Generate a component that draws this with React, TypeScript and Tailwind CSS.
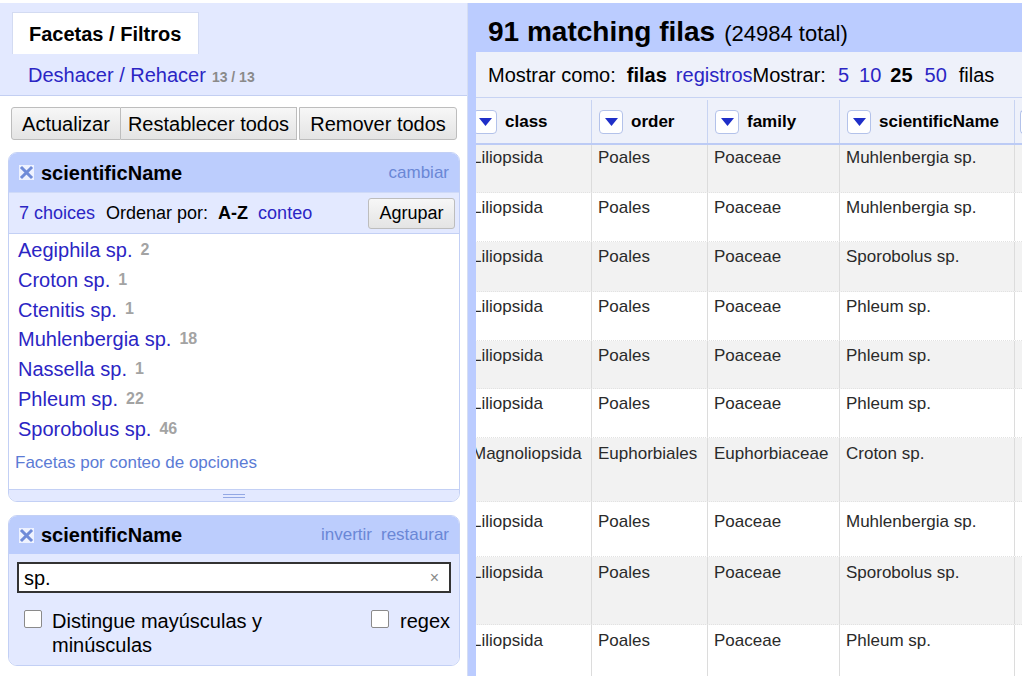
import React from 'react';

const facetChoices = [
  { name: 'Aegiphila sp.', count: 2 },
  { name: 'Croton sp.', count: 1 },
  { name: 'Ctenitis sp.', count: 1 },
  { name: 'Muhlenbergia sp.', count: 18 },
  { name: 'Nassella sp.', count: 1 },
  { name: 'Phleum sp.', count: 22 },
  { name: 'Sporobolus sp.', count: 46 },
];

const rows = [
  { c: 'Liliopsida', o: 'Poales', f: 'Poaceae', s: 'Muhlenbergia sp.', h: 48, pt: 3 },
  { c: 'Liliopsida', o: 'Poales', f: 'Poaceae', s: 'Muhlenbergia sp.', h: 49, pt: 5 },
  { c: 'Liliopsida', o: 'Poales', f: 'Poaceae', s: 'Sporobolus sp.', h: 50, pt: 5 },
  { c: 'Liliopsida', o: 'Poales', f: 'Poaceae', s: 'Phleum sp.', h: 49, pt: 5 },
  { c: 'Liliopsida', o: 'Poales', f: 'Poaceae', s: 'Phleum sp.', h: 48, pt: 5 },
  { c: 'Liliopsida', o: 'Poales', f: 'Poaceae', s: 'Phleum sp.', h: 49, pt: 5 },
  { c: 'Magnoliopsida', o: 'Euphorbiales', f: 'Euphorbiaceae', s: 'Croton sp.', h: 64, pt: 6 },
  { c: 'Liliopsida', o: 'Poales', f: 'Poaceae', s: 'Muhlenbergia sp.', h: 55, pt: 10 },
  { c: 'Liliopsida', o: 'Poales', f: 'Poaceae', s: 'Sporobolus sp.', h: 68, pt: 6 },
  { c: 'Liliopsida', o: 'Poales', f: 'Poaceae', s: 'Phleum sp.', h: 60, pt: 6 },
];

const columns = [
  { key: 'class', w: 'w-[126px]' },
  { key: 'order', w: 'w-[116px]' },
  { key: 'family', w: 'w-[132px]' },
  { key: 'scientificName', w: 'w-[175px]' },
];

function CloseIcon() {
  return (
    <svg width="15" height="15" viewBox="0 0 15 15" className="shrink-0">
      <rect x="0" y="0" width="15" height="15" fill="#eef2ff" />
      <path d="M3 3 L12 12 M12 3 L3 12" stroke="#6f8bd8" strokeWidth="3" strokeLinecap="square" />
    </svg>
  );
}

function DropButton() {
  return (
    <span className="flex items-center justify-center w-[24px] h-[24px] shrink-0 rounded-[4px] border border-[#b3c2ea] bg-white">
      <svg width="13" height="8" viewBox="0 0 13 8">
        <path d="M0 0 L13 0 L6.5 8 Z" fill="#1f2fc8" />
      </svg>
    </span>
  );
}

function Checkbox() {
  return <span className="inline-block w-[18px] h-[18px] shrink-0 rounded-[2px] border border-[#8a8a8a] bg-white" />;
}

export default function App() {
  return (
    <div className="w-[1022px] h-[676px] overflow-hidden bg-white font-['Liberation_Sans',Arial,sans-serif] text-black flex flex-col">
      <div className="h-[3px] bg-white shrink-0" />
      <div className="flex flex-1 min-h-0">
        {/* left panel */}
        <aside className="w-[468px] shrink-0 flex flex-col border-r border-[#d5ddf3]">
          <div className="h-[93px] bg-[#e3e9ff] border-b border-[#c3cff2] flex flex-col">
            <div className="ml-[12px] mt-[9px] w-[187px] h-[42px] bg-white border-l border-t border-r border-[#d3dbf2] flex items-center pl-[16px] text-[20px] font-bold">
              Facetas / Filtros
            </div>
            <div className="pl-[28px] mt-[6px] flex items-baseline gap-[6px]">
              <span className="text-[20px] text-[#2b25c4]">Deshacer / Rehacer</span>
              <span className="text-[14px] font-bold text-[#8a8a8a]">13 / 13</span>
            </div>
          </div>

          <div className="flex pl-[11px] mt-[11px]">
            <button className="h-[33px] w-[110px] text-[20px] border border-[#bdbdbd] rounded-l-[3px] bg-gradient-to-b from-[#f7f7f7] to-[#e4e4e4]">
              Actualizar
            </button>
            <button className="h-[33px] w-[176px] text-[20px] border-y border-r border-[#bdbdbd] bg-gradient-to-b from-[#f7f7f7] to-[#e4e4e4]">
              Restablecer todos
            </button>
            <button className="ml-[2px] h-[33px] w-[158px] text-[20px] border border-[#bdbdbd] rounded-r-[3px] bg-gradient-to-b from-[#f7f7f7] to-[#e4e4e4]">
              Remover todos
            </button>
          </div>

          {/* list facet */}
          <div className="mx-[8px] mt-[12px] w-[452px] rounded-[9px] border border-[#c3d0f5] overflow-hidden">
            <div className="h-[39px] bg-[#bccdfd] flex items-center px-[10px] gap-[7px]">
              <CloseIcon />
              <span className="text-[20px] font-bold flex-1">scientificName</span>
              <span className="text-[17px] text-[#6a87d6]">cambiar</span>
            </div>
            <div className="h-[41px] bg-[#e3e9ff] border-t border-[#cfdaf8] flex items-center pl-[10px] pr-[4px] text-[18px]">
              <span className="text-[#2b25c4]">7 choices</span>
              <span className="ml-[11px]">Ordenar por:</span>
              <span className="ml-[10px] font-bold">A-Z</span>
              <span className="ml-[10px] text-[#2b25c4]">conteo</span>
              <button className="ml-auto h-[31px] w-[87px] text-[18px] border border-[#bdbdbd] rounded-[3px] bg-gradient-to-b from-[#f7f7f7] to-[#e4e4e4]">
                Agrupar
              </button>
            </div>
            <div className="h-[256px] bg-white border-t border-[#c3d0f5] pl-[9px] pt-[1px]">
              {facetChoices.map((c) => (
                <div key={c.name} className="h-[29.8px] flex items-center gap-[8px]">
                  <span className="text-[20px] text-[#2b25c4]">{c.name}</span>
                  <span className="text-[16px] font-bold text-[#a3a3a3]">{c.count}</span>
                </div>
              ))}
              <div className="mt-[6px] -ml-[3px] text-[17px] text-[#5b7bd5]">Facetas por conteo de opciones</div>
            </div>
            <div className="h-[12px] bg-[#e3e9ff] border-t border-[#c3d0f5] flex flex-col items-center justify-center gap-[2px]">
              <span className="block w-[22px] h-[1px] bg-[#93a8e4]" />
              <span className="block w-[22px] h-[1px] bg-[#93a8e4]" />
            </div>
          </div>

          {/* text facet */}
          <div className="mx-[8px] mt-[13px] w-[452px] rounded-[9px] border border-[#c3d0f5] overflow-hidden">
            <div className="h-[38px] bg-[#bccdfd] flex items-center px-[10px] gap-[7px]">
              <CloseIcon />
              <span className="text-[20px] font-bold flex-1">scientificName</span>
              <span className="text-[17px] text-[#6a87d6]">invertir</span>
              <span className="text-[17px] text-[#6a87d6] ml-[2px]">restaurar</span>
            </div>
            <div className="h-[111px] bg-[#e3e9ff] px-[8px] pt-[8px]">
              <div className="h-[31px] bg-white border-2 border-[#333] flex items-center pl-[5px] pr-[10px] text-[20px]">
                <span className="flex-1">sp.</span>
                <span className="text-[16px] text-[#8a8a8a]">×</span>
              </div>
              <div className="flex mt-[17px] pl-[7px] pr-[1px]">
                <Checkbox />
                <span className="ml-[10px] w-[230px] text-[20px] leading-[24px] -mt-[1px]">Distingue mayúsculas y minúsculas</span>
                <span className="ml-auto flex">
                  <Checkbox />
                  <span className="ml-[11px] text-[20px] leading-[24px] -mt-[1px]">regex</span>
                </span>
              </div>
            </div>
          </div>
        </aside>

        {/* right panel */}
        <main className="flex-1 min-w-0 bg-[#bbccff] pl-[8px] flex flex-col">
          <div className="h-[49px] flex items-center pt-[8px] pl-[12px] gap-[9px] shrink-0">
            <span className="text-[28px] font-bold">91 matching filas</span>
            <span className="text-[22px] mt-[3px]">(24984 total)</span>
          </div>
          <div className="h-[46px] bg-[#eef1fa] border-b border-[#c7d3f3] flex items-center pl-[12px] text-[20px] shrink-0">
            <span>Mostrar como:</span>
            <span className="ml-[11px] font-bold">filas</span>
            <span className="ml-[9px] text-[#2b25c4]">registros</span>
            <span>Mostrar:</span>
            <span className="ml-[12px] text-[#2b25c4]">5</span>
            <span className="ml-[10px] text-[#2b25c4]">10</span>
            <span className="ml-[9px] font-bold">25</span>
            <span className="ml-[12px] text-[#2b25c4]">50</span>
            <span className="ml-[12px]">filas</span>
          </div>
          <div className="flex-1 min-h-0 overflow-hidden bg-white">
            <div className="-ml-[10px] w-[600px]">
              <div className="flex h-[47px] pt-[2px] bg-[#eef1fa] border-b-2 border-[#bccbf5]">
                {columns.map((col) => (
                  <div key={col.key} className={`${col.w} shrink-0 border-r border-[#c8d4f2] flex items-center pl-[7px] gap-[8px]`}>
                    <DropButton />
                    <span className="text-[17px] font-bold">{col.key}</span>
                  </div>
                ))}
                <div className="flex-1 flex items-center pl-[5px]">
                  <span className="w-[10px] h-[24px] rounded-l-[4px] border border-r-0 border-[#b3c2ea] bg-white" />
                </div>
              </div>
              {rows.map((r, i) => (
                <div
                  key={i}
                  style={{ height: r.h }}
                  className={`flex border-b border-dotted border-[#e2e2e2] text-[17px] text-[#2a2a2a] ${i % 2 === 0 ? 'bg-[#f2f2f2]' : 'bg-white'}`}
                >
                  {[r.c, r.o, r.f, r.s].map((v, j) => (
                    <div
                      key={j}
                      style={{ paddingTop: r.pt }}
                      className={`${columns[j].w} shrink-0 border-r border-[#dcdcdc] pl-[6px] leading-[20px]`}
                    >
                      {v}
                    </div>
                  ))}
                  <div className="flex-1" />
                </div>
              ))}
            </div>
          </div>
        </main>
      </div>
    </div>
  );
}
